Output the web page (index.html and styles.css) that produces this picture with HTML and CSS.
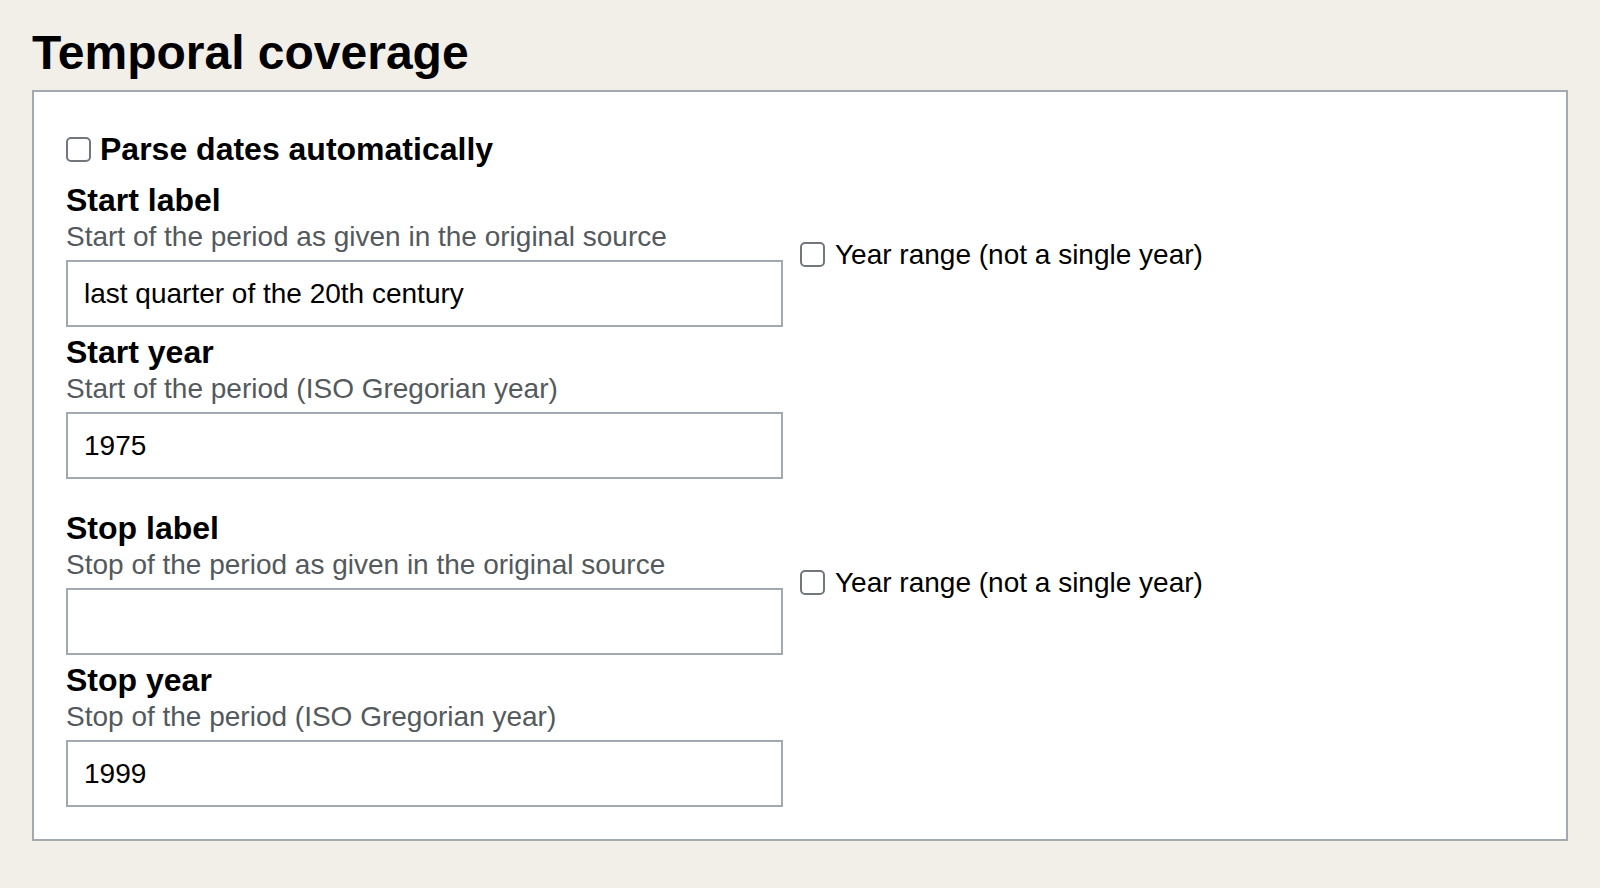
FILE: index.html
```html
<!DOCTYPE html>
<html lang="en">
<head>
<meta charset="utf-8">
<title>Temporal coverage</title>
<link rel="stylesheet" href="styles.css">
</head>
<body>
<div class="page">
  <h2 class="title">Temporal coverage</h2>
  <div class="panel">
    <label class="parse">
      <input type="checkbox" class="cb">
      <span>Parse dates automatically</span>
    </label>

    <div class="group">
      <div class="row">
        <div class="field">
          <div class="label">Start label</div>
          <div class="desc">Start of the period as given in the original source</div>
          <input class="text" type="text" value="last quarter of the 20th century">
        </div>
        <label class="range">
          <input type="checkbox" class="cb">
          <span>Year range (not a single year)</span>
        </label>
      </div>
      <div class="row">
        <div class="field">
          <div class="label">Start year</div>
          <div class="desc">Start of the period (ISO Gregorian year)</div>
          <input class="text" type="text" value="1975">
        </div>
      </div>
    </div>

    <div class="group group-stop">
      <div class="row">
        <div class="field">
          <div class="label">Stop label</div>
          <div class="desc">Stop of the period as given in the original source</div>
          <input class="text" type="text" value="">
        </div>
        <label class="range">
          <input type="checkbox" class="cb">
          <span>Year range (not a single year)</span>
        </label>
      </div>
      <div class="row">
        <div class="field">
          <div class="label">Stop year</div>
          <div class="desc">Stop of the period (ISO Gregorian year)</div>
          <input class="text" type="text" value="1999">
        </div>
      </div>
    </div>
  </div>
</div>
</body>
</html>
```

FILE: styles.css
```css
html, body {
  margin: 0;
  padding: 0;
  background: #f2efe9;
}

body {
  font-family: "Liberation Sans", Arial, Helvetica, sans-serif;
  color: #000;
}

.page {
  padding: 25px 32px 0 32px;
}

.title {
  margin: 0 0 9px 0;
  font-size: 48px;
  line-height: 56px;
  font-weight: bold;
  color: #000;
}

.panel {
  background: #fff;
  border: 2px solid #a2a9b1;
  padding: 39px 32px 32px 32px;
}

.cb {
  appearance: none;
  -webkit-appearance: none;
  margin: 0;
  width: 25px;
  height: 25px;
  border: 2px solid #72777d;
  border-radius: 5px;
  background: #fff;
  flex: none;
  box-sizing: border-box;
}

.parse {
  display: flex;
  align-items: center;
  gap: 9px;
  font-size: 32px;
  line-height: 36px;
  font-weight: bold;
}

.group {
  margin-top: 15px;
}

.group-stop {
  margin-top: 31px;
}

.row {
  display: flex;
  align-items: center;
  gap: 17px;
}

.row + .row {
  margin-top: 7px;
}

.field {
  width: 717px;
  display: flex;
  flex-direction: column;
}

.label {
  font-size: 32px;
  line-height: 36px;
  font-weight: bold;
}

.desc {
  font-size: 28px;
  line-height: 34px;
  color: #54595d;
  padding-top: 2px;
  margin-bottom: 6px;
}

.text {
  box-sizing: border-box;
  width: 717px;
  height: 67px;
  margin: 0;
  border: 2px solid #a2a9b1;
  border-radius: 0;
  padding: 0 16px;
  font-family: "Liberation Sans", Arial, Helvetica, sans-serif;
  font-size: 28px;
  color: #000;
  background: #fff;
  outline: none;
}

.range {
  display: flex;
  align-items: center;
  gap: 10px;
  font-size: 28px;
  line-height: 34px;
  color: #000;
}
```
